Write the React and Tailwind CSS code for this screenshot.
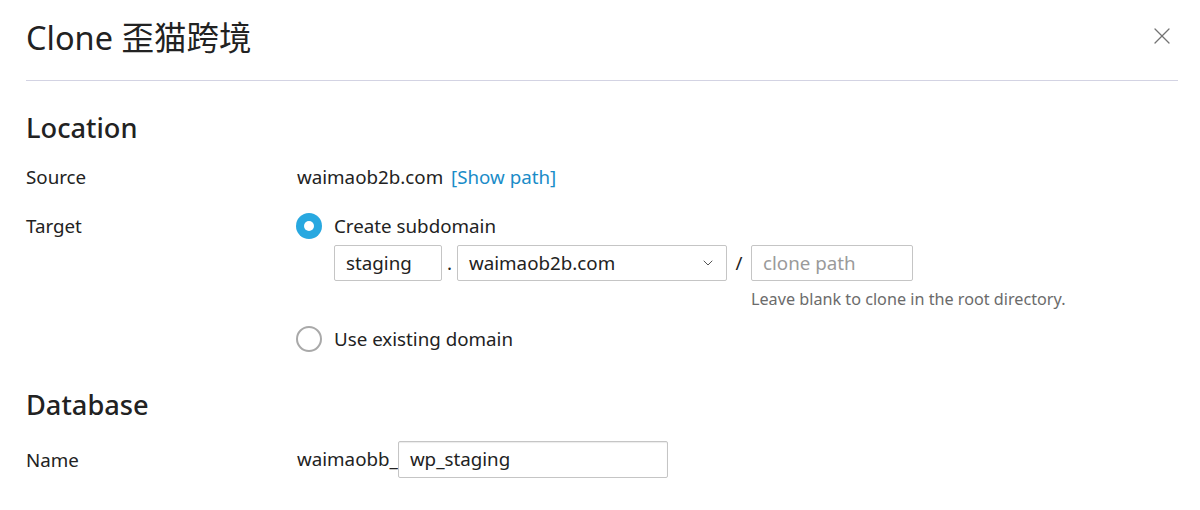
import { X, ChevronDown } from "lucide-react";

const font = { fontFamily: '"Noto Sans", "Noto Sans CJK SC", sans-serif' };

const Row = ({ label, children, className = "" }) => (
  <div className={`flex ${className}`}>
    <div className="w-[271px] shrink-0 text-[18.75px] text-[#222] leading-[26px]">{label}</div>
    <div className="flex-1">{children}</div>
  </div>
);

const Radio = ({ checked }) =>
  checked ? (
    <span className="w-[26px] h-[26px] rounded-full bg-[#28a8e0] flex items-center justify-center shrink-0">
      <span className="w-[10px] h-[10px] rounded-full bg-white" />
    </span>
  ) : (
    <span className="w-[26px] h-[26px] rounded-full border-2 border-[#a9a9a9] bg-white shrink-0" />
  );

export default function App() {
  return (
    <div className="w-[1200px] h-[510px] bg-white text-[#222] overflow-hidden" style={font}>
      {/* Header */}
      <div className="ml-[26px] mr-[22px] flex items-center justify-between h-[81px] border-b border-[#d3d3e3]">
        <h1 className="text-[32.5px] leading-none font-normal text-[#222] -mt-[4px]">Clone 歪猫跨境</h1>
        <X size={28} strokeWidth={1.1} className="text-[#737373] mr-[2px] -mt-[8px]" />
      </div>

      <div className="px-[26px]">
        {/* Location */}
        <h2 className="mt-[31px] text-[27.2px] leading-[32px] font-medium text-[#222]">Location</h2>

        <Row label="Source" className="mt-[20px]">
          <div className="text-[18.75px] leading-[26px]">
            waimaob2b.com <span className="text-[#1a8cc8] ml-[3px]">[Show path]</span>
          </div>
        </Row>

        <Row label="Target" className="mt-[23px]">
          <div className="flex items-center gap-[12px] -ml-[1px]">
            <Radio checked />
            <span className="text-[18.75px] leading-[26px]">Create subdomain</span>
          </div>
          <div className="ml-[37px] mt-[6px] flex items-start">
            <div className="w-[108px] h-[36px] border border-[#c5c5c5] rounded-[2px] px-[11px] flex items-center text-[18.75px]">
              staging
            </div>
            <span className="w-[15px] text-center text-[18.75px] leading-[36px]">.</span>
            <div className="w-[270px] h-[36px] border border-[#c5c5c5] rounded-[2px] pl-[11px] pr-[10px] flex items-center justify-between text-[18.75px]">
              <span>waimaob2b.com</span>
              <ChevronDown size={16} strokeWidth={1.5} className="text-[#555]" />
            </div>
            <span className="w-[24px] text-center text-[18.75px] leading-[36px]">/</span>
            <div className="flex flex-col">
              <div className="w-[162px] h-[36px] border border-[#c5c5c5] rounded-[2px] px-[11px] flex items-center text-[18.75px] text-[#9a9a9a]">
                clone path
              </div>
              <div className="mt-[7px] text-[16.2px] leading-[22px] text-[#6b6b6b]">
                Leave blank to clone in the root directory.
              </div>
            </div>
          </div>
          <div className="flex items-center gap-[12px] -ml-[1px] mt-[16px]">
            <Radio />
            <span className="text-[18.75px] leading-[26px]">Use existing domain</span>
          </div>
        </Row>

        {/* Database */}
        <h2 className="mt-[37px] text-[27.2px] leading-[32px] font-medium text-[#222]">Database</h2>

        <Row label="Name" className="mt-[20px] items-center">
          <div className="flex items-center">
            <span className="text-[18.75px]">waimaobb_</span>
            <div className="w-[270px] h-[37px] border border-[#c5c5c5] rounded-[2px] px-[11px] flex items-center text-[18.75px] shadow-[inset_0_1px_1px_rgba(0,0,0,0.08)]">
              wp_staging
            </div>
          </div>
        </Row>
      </div>
    </div>
  );
}
